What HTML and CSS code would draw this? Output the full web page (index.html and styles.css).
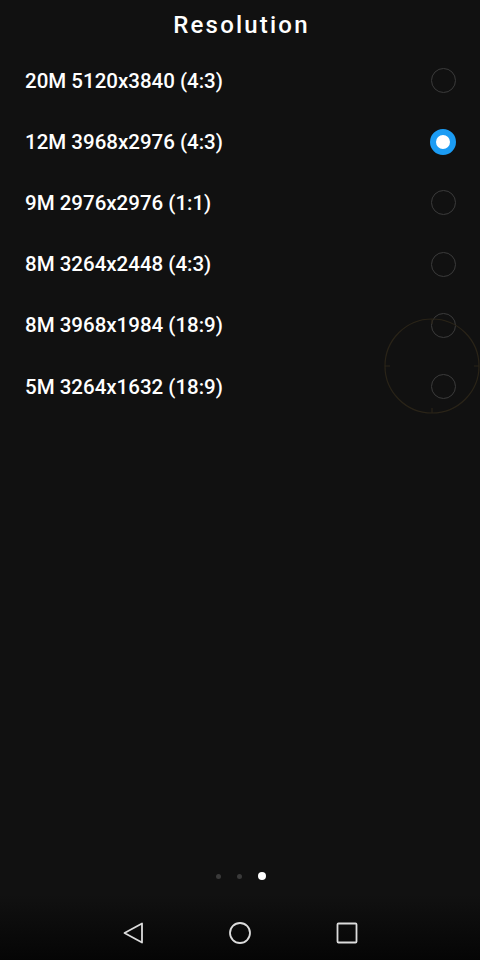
FILE: index.html
```html
<!DOCTYPE html>
<html lang="en">
<head>
  <meta charset="UTF-8" />
  <meta name="viewport" content="width=device-width, initial-scale=1.0" />
  <title>Resolution</title>
  <link rel="stylesheet" href="styles.css">
</head>
<body>
  <div class="screen">
    <header class="title">Resolution</header>

    <ul class="options">
      <li class="option"><span>20M 5120x3840 (4:3)</span><span class="radio"></span></li>
      <li class="option"><span>12M 3968x2976 (4:3)</span><span class="radio checked"></span></li>
      <li class="option"><span>9M 2976x2976 (1:1)</span><span class="radio"></span></li>
      <li class="option"><span>8M 3264x2448 (4:3)</span><span class="radio"></span></li>
      <li class="option"><span>8M 3968x1984 (18:9)</span><span class="radio"></span></li>
      <li class="option"><span>5M 3264x1632 (18:9)</span><span class="radio"></span></li>
    </ul>

    <!-- focus ring from the camera preview, sits over the list -->
    <svg class="focus" width="100" height="100" viewBox="0 0 100 100">
      <circle cx="50" cy="50" r="47" fill="none" stroke="#2a2418" stroke-width="1.2"/>
      <path d="M3 50h5M92 50h5M50 92v5M50 3v5" stroke="#2a2418" stroke-width="1.2"/>
    </svg>

    <div class="dots">
      <span class="dot"></span>
      <span class="dot"></span>
      <span class="dot active"></span>
    </div>

    <nav class="navbar">
      <svg width="24" height="24" viewBox="0 0 24 24">
        <path d="M21 2.5v19L3.5 12z" fill="none" stroke="#dcdcdc" stroke-width="1.8" stroke-linejoin="round"/>
      </svg>
      <svg width="24" height="24" viewBox="0 0 24 24">
        <circle cx="12" cy="12" r="10" fill="none" stroke="#dcdcdc" stroke-width="1.8"/>
      </svg>
      <svg width="24" height="24" viewBox="0 0 24 24">
        <rect x="2.5" y="2.5" width="19" height="19" rx="1" fill="none" stroke="#dcdcdc" stroke-width="1.8"/>
      </svg>
    </nav>
  </div>
</body>
</html>
```

FILE: styles.css
```css
body {
  margin: 0;
  background: #111111;
  color: #ffffff;
  font-family: Roboto, "Liberation Sans", sans-serif;
}
.screen {
  position: relative;
  height: 960px;
  display: flex;
  flex-direction: column;
  background: linear-gradient(to bottom, #111111 0, #111111 895px, #050505 960px);
}
.title {
  height: 50px;
  line-height: 50px;
  text-align: center;
  font-size: 24px;
  font-weight: 500;
  letter-spacing: 2.2px;
  padding-left: 3px;
}
.options {
  list-style: none;
  margin: 0;
  padding: 0;
}
.option {
  height: 61.2px;
  display: flex;
  align-items: center;
  justify-content: space-between;
  padding: 0 24px 0 25px;
  font-size: 20.5px;
  font-weight: 500;
}
.radio {
  width: 23px;
  height: 23px;
  border: 1.4px solid #3b3b3b;
  border-radius: 50%;
}
.radio.checked {
  width: 14px;
  height: 14px;
  border: 6.5px solid #1b9cf4;
  background: #ffffff;
}
.focus {
  position: absolute;
  left: 382px;
  top: 316px;
}
.dots {
  margin-top: auto;
  height: 8px;
  display: flex;
  justify-content: center;
  align-items: center;
  gap: 16px;
  padding-left: 2px;
}
.dot {
  width: 5px;
  height: 5px;
  border-radius: 50%;
  background: #3a3a3a;
}
.dot.active {
  width: 8px;
  height: 8px;
  background: #ffffff;
}
.navbar {
  height: 54px;
  margin-top: 26px;
  display: flex;
  justify-content: center;
  align-items: center;
  gap: 83px;
}
```
